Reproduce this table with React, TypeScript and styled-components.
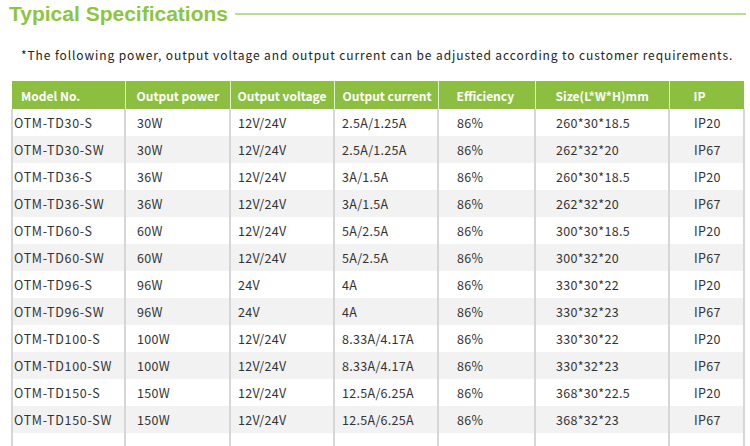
import styled, { createGlobalStyle } from "styled-components";

const GlobalStyle = createGlobalStyle`
  body {
    margin: 0;
    background: #fff;
    overflow: hidden;
  }
`;

type Row = [string, string, string, string, string, string, string];

const rows: Row[] = [
    ["OTM-TD30-S", "30W", "12V/24V", "2.5A/1.25A", "86%", "260*30*18.5", "IP20"],
    ["OTM-TD30-SW", "30W", "12V/24V", "2.5A/1.25A", "86%", "262*32*20", "IP67"],
    ["OTM-TD36-S", "36W", "12V/24V", "3A/1.5A", "86%", "260*30*18.5", "IP20"],
    ["OTM-TD36-SW", "36W", "12V/24V", "3A/1.5A", "86%", "262*32*20", "IP67"],
    ["OTM-TD60-S", "60W", "12V/24V", "5A/2.5A", "86%", "300*30*18.5", "IP20"],
    ["OTM-TD60-SW", "60W", "12V/24V", "5A/2.5A", "86%", "300*32*20", "IP67"],
    ["OTM-TD96-S", "96W", "24V", "4A", "86%", "330*30*22", "IP20"],
    ["OTM-TD96-SW", "96W", "24V", "4A", "86%", "330*32*23", "IP67"],
    ["OTM-TD100-S", "100W", "12V/24V", "8.33A/4.17A", "86%", "330*30*22", "IP20"],
    ["OTM-TD100-SW", "100W", "12V/24V", "8.33A/4.17A", "86%", "330*32*23", "IP67"],
    ["OTM-TD150-S", "150W", "12V/24V", "12.5A/6.25A", "86%", "368*30*22.5", "IP20"],
    ["OTM-TD150-SW", "150W", "12V/24V", "12.5A/6.25A", "86%", "368*32*23", "IP67"],
];

// column widths and text indents taken from the screenshot
const columns = [
    { title: "Model No.", width: 113, head: 9, body: 1, spacing: 0.7 },
    { title: "Output power", width: 105, head: 11, body: 11, spacing: 0.3 },
    { title: "Output voltage", width: 104, head: 7, body: 7, spacing: 0.3 },
    { title: "Output current", width: 104, head: 8, body: 7, spacing: 0.3 },
    { title: "Efficiency", width: 97, head: 18, body: 18, spacing: 0.3 },
    { title: "Size(L*W*H)mm", width: 134, head: 20, body: 20, spacing: 0.3 },
    { title: "IP", width: 75, head: 24, body: 24, spacing: 0.3 },
];

const App = () => {
    return (
        <Page>
            <GlobalStyle />
            <TitleBar>
                <Title>Typical Specifications</Title>
                <TitleLine />
            </TitleBar>
            <Note>
                *The following power, output voltage and output current can be
                adjusted according to customer requirements.
            </Note>
            <SpecTable>
                <colgroup>
                    {columns.map((c) => (
                        <col key={c.title} style={{ width: c.width }} />
                    ))}
                </colgroup>
                <thead>
                    <tr>
                        {columns.map((c) => (
                            <HeadCell key={c.title} $indent={c.head}>
                                {c.title}
                            </HeadCell>
                        ))}
                    </tr>
                </thead>
                <tbody>
                    {rows.map((r, i) => (
                        <BodyRow key={r[0]} $striped={i % 2 === 1}>
                            {r.map((v, j) => (
                                <Cell
                                    key={j}
                                    $indent={columns[j].body}
                                    $spacing={columns[j].spacing}
                                >
                                    {v}
                                </Cell>
                            ))}
                        </BodyRow>
                    ))}
                    <BodyRow $striped={false}>
                        {columns.map((c) => (
                            <Cell key={c.title} $indent={c.body} $spacing={0} />
                        ))}
                    </BodyRow>
                </tbody>
            </SpecTable>
        </Page>
    );
};

export default App;

const Page = styled.div`
  width: 750px;
  height: 446px;
  overflow: hidden;
  padding: 0 0 0 11px;
  box-sizing: border-box;
`;

const TitleBar = styled.div`
  display: flex;
  align-items: center;
  gap: 7px;
  height: 28px;
  margin-left: -2px;
`;

const Title = styled.h2`
  margin: 0;
  font-family: "Liberation Sans", Arial, sans-serif;
  font-weight: 700;
  font-size: 21px;
  line-height: 28px;
  color: #8cc63f;
  white-space: nowrap;
`;

const TitleLine = styled.div`
  flex: 1;
  height: 2px;
  margin-right: 4px;
  background: #bcdc94;
`;

const Note = styled.p`
  margin: 18px 0 0 10px;
  height: 35px;
  font-family: "Noto Sans CJK SC", "Noto Sans", sans-serif;
  font-size: 12px;
  line-height: 18px;
  letter-spacing: 0.9px;
  color: #222;
  white-space: nowrap;
`;

const SpecTable = styled.table`
  width: 732px;
  table-layout: fixed;
  border-collapse: collapse;
  font-family: "Noto Sans CJK SC", "Noto Sans", sans-serif;
  font-size: 12.5px;
  color: #333;
`;

const HeadCell = styled.th<{ $indent: number }>`
  height: 28px;
  padding: 0 0 0 ${(p) => p.$indent}px;
  background: #8cbf3f;
  color: #fff;
  font-weight: 700;
  font-size: 12px;
  text-align: left;
  white-space: nowrap;
  border-left: 1px solid #e3efd2;
  &:first-child {
    border-left: none;
  }
`;

const BodyRow = styled.tr<{ $striped: boolean }>`
  background: ${(p) => (p.$striped ? "#f2f2f2" : "#fff")};
`;

const Cell = styled.td<{ $indent: number; $spacing: number }>`
  height: 27px;
  padding: 0 0 0 ${(p) => p.$indent}px;
  letter-spacing: ${(p) => p.$spacing}px;
  white-space: nowrap;
  border-left: 2px solid #d6d6d6;
  border-right: 2px solid #d6d6d6;
`;
